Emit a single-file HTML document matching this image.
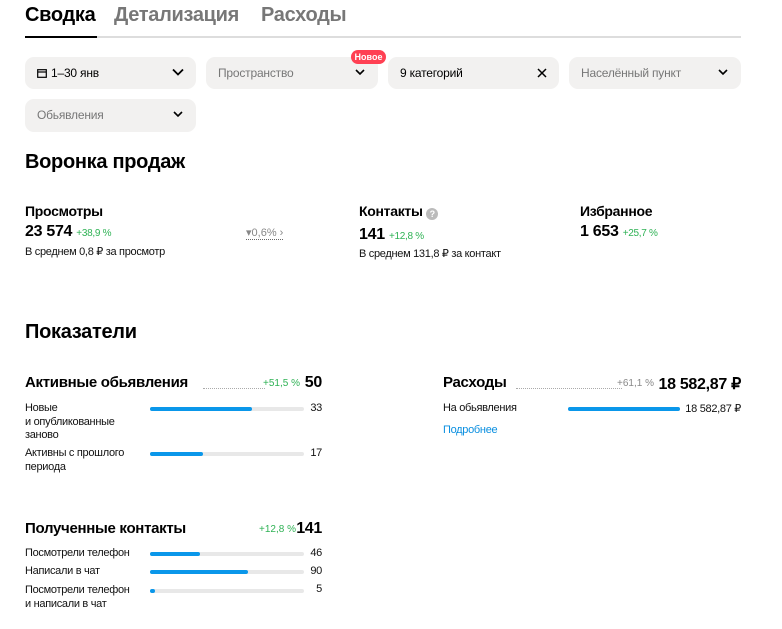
<!DOCTYPE html>
<html><head><meta charset="utf-8"><style>
*{margin:0;padding:0;box-sizing:border-box}
body{width:782px;height:629px;background:#fff;font-family:"Liberation Sans",sans-serif;color:#000;position:relative;overflow:hidden}
.a{position:absolute;white-space:nowrap}
.tab{font-size:20px;font-weight:bold;top:4px;letter-spacing:-0.3px}
.box{position:absolute;height:32px;background:#f2f1f0;border-radius:9px;font-size:12px;color:#777;padding-left:12px;line-height:32px;letter-spacing:-0.2px}
.chev{position:absolute;right:12px;top:11px;width:12px;height:8px}
.h{font-size:20px;font-weight:bold;letter-spacing:-0.3px}
.t{font-size:14px;font-weight:bold;letter-spacing:-0.3px}
.n{font-size:16px;font-weight:bold;letter-spacing:-0.3px}
.g{color:#2fb255;font-size:10px;font-weight:normal}
.s{font-size:11px;letter-spacing:-0.3px;color:#111}
.bar{position:absolute;height:4px;background:#e8e8e8;border-radius:2px}
.bar i{position:absolute;left:0;top:0;height:4px;background:#0a97ea;border-radius:2px}
.dot{position:absolute;border-bottom:1px dotted #aaa;height:1px}
</style></head><body>
<div class="a tab" style="left:25px">Сводка</div>
<div class="a tab" style="left:114px;color:#777">Детализация</div>
<div class="a tab" style="left:261px;color:#777">Расходы</div>
<div class="a" style="left:25px;top:36px;width:716px;height:2px;background:#ddd"></div>
<div class="a" style="left:25px;top:36px;width:72px;height:2px;background:#000"></div>

<div class="box" style="left:25px;top:57px;width:171px;color:#000"><svg width="10" height="9" style="margin-right:4px;vertical-align:-1px" viewBox="0 0 10 9"><rect x="0.7" y="0.7" width="8.6" height="7.6" fill="none" stroke="#000" stroke-width="1.2"/><line x1="0.7" y1="3" x2="9.3" y2="3" stroke="#000" stroke-width="1.2"/></svg>1–30 янв<svg class="chev" viewBox="0 0 12 8"><path d="M1 1.5l5 5 5-5" fill="none" stroke="#000" stroke-width="1.8"/></svg></div>
<div class="box" style="left:206px;top:57px;width:172px">Пространство<svg class="chev" viewBox="0 0 12 8"><path d="M2 2l4 4 4-4" fill="none" stroke="#000" stroke-width="1.6"/></svg></div>
<div class="a" style="left:351px;top:50px;width:35px;height:14px;background:#ff4053;border-radius:7px;color:#fff;font-size:9px;line-height:14px;text-align:center;font-weight:bold">Новое</div>
<div class="box" style="left:388px;top:57px;width:171px;color:#000">9 категорий<svg class="chev" style="top:11px;width:10px;height:10px" viewBox="0 0 10 10"><path d="M1 1l8 8M9 1l-8 8" stroke="#000" stroke-width="1.5"/></svg></div>
<div class="box" style="left:569px;top:57px;width:172px">Населённый пункт<svg class="chev" viewBox="0 0 12 8"><path d="M2 2l4 4 4-4" fill="none" stroke="#000" stroke-width="1.6"/></svg></div>
<div class="box" style="left:25px;top:99px;width:171px;height:33px;line-height:33px">Обьявления<svg class="chev" viewBox="0 0 12 8"><path d="M2 2l4 4 4-4" fill="none" stroke="#000" stroke-width="1.6"/></svg></div>

<div class="a h" style="left:25px;top:151px">Воронка продаж</div>
<div class="a t" style="left:25px;top:203px">Просмотры</div>
<div class="a n" style="left:25px;top:223px">23 574 <span class="g">+38,9 %</span></div>
<div class="a s" style="left:25px;top:245px">В среднем 0,8 ₽ за просмотр</div>
<div class="a" style="left:246px;top:226px;font-size:11px;color:#888;border-bottom:1px dotted #666">▾0,6% ›</div>
<div class="a t" style="left:359px;top:203px">Контакты <span style="display:inline-block;width:12px;height:12px;border-radius:6px;background:#bbb;color:#fff;font-size:9px;text-align:center;line-height:12px;vertical-align:-1px">?</span></div>
<div class="a n" style="left:359px;top:226px">141 <span class="g">+12,8 %</span></div>
<div class="a s" style="left:359px;top:247px">В среднем 131,8 ₽ за контакт</div>
<div class="a t" style="left:580px;top:203px">Избранное</div>
<div class="a n" style="left:580px;top:223px">1 653 <span class="g">+25,7 %</span></div>

<div class="a h" style="left:25px;top:321px">Показатели</div>
<div class="a n" style="left:25px;top:374px;font-size:15px">Активные обьявления</div>
<div class="dot" style="left:203px;top:388px;width:62px"></div>
<div class="a" style="right:482px;top:378px;color:#2fb255;font-size:10px">+51,5 %</div>
<div class="a n" style="right:460px;top:374px">50</div>
<div class="a s" style="left:25px;top:402px;white-space:normal;width:110px;line-height:13.5px">Новые<br>и опубликованные<br>заново</div>
<div class="bar" style="left:150px;top:407px;width:154px"><i style="width:102px"></i></div>
<div class="a s" style="right:460px;top:402px">33</div>
<div class="a s" style="left:25px;top:447px;line-height:13.5px">Активны с прошлого<br>периода</div>
<div class="bar" style="left:150px;top:452px;width:154px"><i style="width:53px"></i></div>
<div class="a s" style="right:460px;top:447px">17</div>

<div class="a n" style="left:443px;top:374px;font-size:15px">Расходы</div>
<div class="dot" style="left:516px;top:388px;width:106px"></div>
<div class="a" style="right:128px;top:378px;color:#888;font-size:10px">+61,1 %</div>
<div class="a n" style="right:41px;top:374px">18 582,87 ₽</div>
<div class="a s" style="left:443px;top:402px">На обьявления</div>
<div class="bar" style="left:568px;top:407px;width:112px"><i style="width:112px"></i></div>
<div class="a s" style="right:41px;top:402px">18 582,87 ₽</div>
<div class="a s" style="left:443px;top:424px;color:#0a8fe0">Подробнее</div>

<div class="a n" style="left:25px;top:520px;font-size:15px">Полученные контакты</div>
<div class="a" style="right:486px;top:524px;color:#2fb255;font-size:10px">+12,8 %</div>
<div class="a n" style="right:460px;top:520px">141</div>
<div class="a s" style="left:25px;top:547px">Посмотрели телефон</div>
<div class="bar" style="left:150px;top:552px;width:154px"><i style="width:50px"></i></div>
<div class="a s" style="right:460px;top:547px">46</div>
<div class="a s" style="left:25px;top:565px">Написали в чат</div>
<div class="bar" style="left:150px;top:570px;width:154px"><i style="width:98px"></i></div>
<div class="a s" style="right:460px;top:565px">90</div>
<div class="a s" style="left:25px;top:583px;line-height:14px">Посмотрели телефон<br>и написали в чат</div>
<div class="bar" style="left:150px;top:589px;width:154px"><i style="width:5px"></i></div>
<div class="a s" style="right:460px;top:583px">5</div>
</body></html>
